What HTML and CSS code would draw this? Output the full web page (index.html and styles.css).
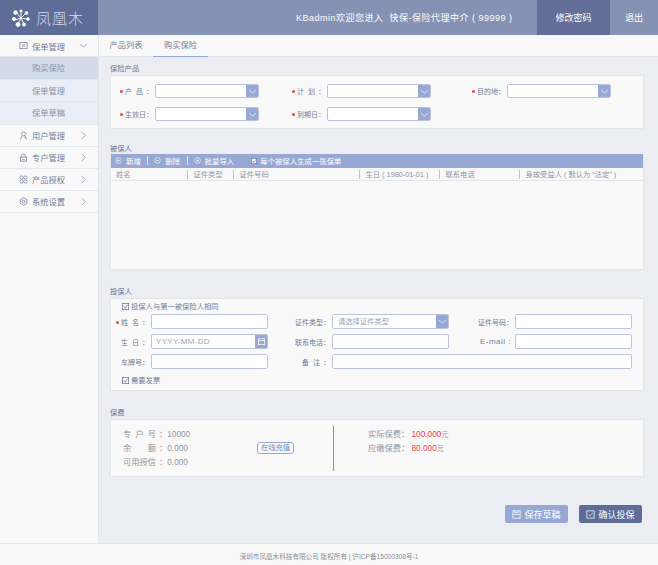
FILE: index.html
```html
<!DOCTYPE html>
<html lang="zh-CN">

<head>
    <meta charset="UTF-8">
    <meta name="viewport" content="width=device-width, initial-scale=1.0">
    <title>购买保险</title>
    <link rel="stylesheet" href="styles.css">
</head>

<body>
    <header class="top">
        <div class="logo">
            <svg class="logo_icon" viewBox="0 0 18 18">
                <path d="M9 9 4 3M9 9l5-5M9 9 3 11M9 9l6 1M9 9l-3 6M9 9l3 6M9 9V2" />
                <circle cx="3.5" cy="3.5" r="1.8" />
                <circle cx="9" cy="2" r="1.1" />
                <circle cx="14.5" cy="4" r="1.4" />
                <circle cx="2" cy="10" r="1.6" />
                <circle cx="16" cy="10" r="1.3" />
                <circle cx="6" cy="15.5" r="2" />
                <circle cx="12" cy="15.5" r="1.5" />
            </svg>
            <span class="logo_name">凤凰木</span>
        </div>
        <div class="welcome">KBadmin欢迎您进入&nbsp;&nbsp;快保-保险代理中介 ( 99999 )</div>
        <a class="top_btn top_pwd">修改密码</a>
        <a class="top_btn top_exit">退出</a>
    </header>

    <div class="middle">
        <nav class="side">
            <div class="menu">
                <svg class="menu_icon" viewBox="0 0 10 10"><rect x="1" y="1.5" width="8" height="7" /><path d="M3.2 3.5 6.8 6.5M6.8 3.5 3.2 6.5" /></svg>
                <span>保单管理</span>
                <svg class="menu_arrow" viewBox="0 0 10 10"><path d="M1 3l4 4 4-4" /></svg>
            </div>
            <div class="sub sub_on">购买保险</div>
            <div class="sub">保单管理</div>
            <div class="sub">保单草稿</div>
            <div class="menu">
                <svg class="menu_icon" viewBox="0 0 10 10"><circle cx="5" cy="3.2" r="2.2" /><path d="M1.5 9.5 3.5 5.2M8.5 9.5 6.5 5.2M6 7.5h2" /></svg>
                <span>用户管理</span>
                <svg class="menu_arrow" viewBox="0 0 10 10"><path d="M3 1l4 4-4 4" /></svg>
            </div>
            <div class="menu">
                <svg class="menu_icon" viewBox="0 0 10 10"><rect x="1.5" y="4.5" width="7" height="4.5" /><path d="M3 4.5V3a2 2 0 0 1 4 0v1.5M3.5 7h3" /></svg>
                <span>专户管理</span>
                <svg class="menu_arrow" viewBox="0 0 10 10"><path d="M3 1l4 4-4 4" /></svg>
            </div>
            <div class="menu">
                <svg class="menu_icon" viewBox="0 0 10 10"><circle cx="2.8" cy="2.8" r="1.8" /><circle cx="7.2" cy="2.8" r="1.8" /><circle cx="2.8" cy="7.2" r="1.8" /><circle cx="7.2" cy="7.2" r="1.8" /></svg>
                <span>产品授权</span>
                <svg class="menu_arrow" viewBox="0 0 10 10"><path d="M3 1l4 4-4 4" /></svg>
            </div>
            <div class="menu">
                <svg class="menu_icon" viewBox="0 0 10 10"><path d="M5 .8 8.7 3v4.2L5 9.2 1.300 7V3z" /><circle cx="5" cy="5" r="1.6" /></svg>
                <span>系统设置</span>
                <svg class="menu_arrow" viewBox="0 0 10 10"><path d="M3 1l4 4-4 4" /></svg>
            </div>
        </nav>

        <div class="content">
            <div class="tabs">
                <span class="tab tab_first">产品列表</span>
                <span class="tab tab_on">购买保险</span>
            </div>

            <main class="main">
                <h2 class="title">保险产品</h2>
                <section class="panel product">
                    <div class="field">
                        <label class="req"><span class="spread">产品</span>：</label>
                        <div class="control"><span class="control_txt"></span><span class="control_btn"><svg viewBox="0 0 10 10"><path d="M1.500 3.500 5 7l3.500-3.500" /></svg></span></div>
                    </div>
                    <div class="field">
                        <label class="req"><span class="spread">计划</span>：</label>
                        <div class="control"><span class="control_txt"></span><span class="control_btn"><svg viewBox="0 0 10 10"><path d="M1.500 3.500 5 7l3.500-3.500" /></svg></span></div>
                    </div>
                    <div class="field">
                        <label class="req">目的地：</label>
                        <div class="control"><span class="control_txt"></span><span class="control_btn"><svg viewBox="0 0 10 10"><path d="M1.500 3.500 5 7l3.500-3.500" /></svg></span></div>
                    </div>
                    <div class="field">
                        <label class="req">生效日：</label>
                        <div class="control"><span class="control_txt"></span><span class="control_btn"><svg viewBox="0 0 10 10"><path d="M1.500 3.500 5 7l3.500-3.500" /></svg></span></div>
                    </div>
                    <div class="field">
                        <label class="req">到期日：</label>
                        <div class="control"><span class="control_txt"></span><span class="control_btn"><svg viewBox="0 0 10 10"><path d="M1.500 3.500 5 7l3.500-3.500" /></svg></span></div>
                    </div>
                </section>

                <h2 class="title title_mid">被保人</h2>
                <section class="panel insured">
                    <div class="toolbar">
                        <span class="tool"><svg viewBox="0 0 10 10"><circle cx="5" cy="5" r="4" /><path d="M3 5h4M5 3v4" /></svg>新增</span>
                        <span class="tool_line"></span>
                        <span class="tool"><svg viewBox="0 0 10 10"><circle cx="5" cy="5" r="4" /><path d="M3 5h4" /></svg>删除</span>
                        <span class="tool_line"></span>
                        <span class="tool"><svg viewBox="0 0 10 10"><circle cx="5" cy="5" r="4" /><path d="M3 5h4M5 3v4" /></svg>批量导入</span>
                        <span class="tool tool_check"><svg class="tick_white" viewBox="0 0 10 10"><rect x=".5" y=".5" width="9" height="9" /><path d="M2.500 5 4.500 7.500 8 2.500" /></svg>每个被保人生成一张保单</span>
                    </div>
                    <div class="thead">
                        <span>姓名</span>
                        <span>证件类型</span>
                        <span>证件号码</span>
                        <span>生日 ( 1980-01-01 )</span>
                        <span>联系电话</span>
                        <span>身故受益人 ( 默认为 “法定” )</span>
                    </div>
                </section>

                <h2 class="title title_low">投保人</h2>
                <section class="panel holder">
                    <div class="check"><svg class="tick" viewBox="0 0 10 10"><rect x=".5" y=".5" width="9" height="9" /><path d="M2.500 5 4.500 7.500 8 2.500" /></svg>投保人与第一被保险人相同</div>
                    <div class="holder_grid">
                        <label class="req"><span class="spread">姓名</span>：</label>
                        <div class="control"></div>
                        <label>证件类型：</label>
                        <div class="control"><span class="control_txt">请选择证件类型</span><span class="control_btn"><svg viewBox="0 0 10 10"><path d="M1.500 3.500 5 7l3.500-3.500" /></svg></span></div>
                        <label>证件号码：</label>
                        <div class="control"></div>

                        <label><span class="spread">生日</span>：</label>
                        <div class="control"><span class="control_txt date_txt">YYYY-MM-DD</span><span class="control_btn"><svg viewBox="0 0 10 10"><rect x="1.500" y="2" width="7" height="6.500" /><path d="M1.500 4h7" /></svg></span></div>
                        <label>联系电话：</label>
                        <div class="control"></div>
                        <label class="mail">E-mail :</label>
                        <div class="control"></div>

                        <label>车牌号：</label>
                        <div class="control"></div>
                        <label><span class="spread">备注</span>：</label>
                        <div class="control control_wide"></div>
                    </div>
                    <div class="check"><svg class="tick" viewBox="0 0 10 10"><rect x=".5" y=".5" width="9" height="9" /><path d="M2.500 5 4.500 7.500 8 2.500" /></svg>需要发票</div>
                </section>

                <h2 class="title title_low">保费</h2>
                <section class="panel fee">
                    <div class="fee_left">
                        <div class="fee_row"><span class="fee_label">专户号</span>：<span class="fee_num">10000</span></div>
                        <div class="fee_row"><span class="fee_label">余额</span>：<span class="fee_num">0.000</span></div>
                        <div class="fee_row"><span class="fee_label">可用授信</span>：<span class="fee_num">0.000</span></div>
                    </div>
                    <a class="recharge">在线充值</a>
                    <div class="fee_line"></div>
                    <div class="fee_right">
                        <div class="fee_row"><span class="fee_label2">实际保费：</span><span class="fee_red">100.000</span><span class="fee_unit">元</span></div>
                        <div class="fee_row"><span class="fee_label2">应缴保费：</span><span class="fee_red">80.000</span><span class="fee_unit">元</span></div>
                    </div>
                </section>

                <div class="actions">
                    <a class="btn btn_save"><svg viewBox="0 0 10 10"><rect x="1" y="1" width="8" height="8" /><path d="M1 5h8M3 1v2h4V1" /></svg>保存草稿</a>
                    <a class="btn btn_ok"><svg viewBox="0 0 10 10"><rect x="1" y="1" width="8" height="8" /><path d="M3 5l1.500 1.500L7.500 3.500" /></svg>确认投保</a>
                </div>
            </main>
        </div>
    </div>

    <footer class="foot">深圳市凤凰木科技有限公司 版权所有 | 沪ICP备15000308号-1</footer>
</body>

</html>
```

FILE: styles.css
```css
* {
    box-sizing: border-box;
}

body {
    margin: 0;
    width: 658px;
    height: 565px;
    overflow: hidden;
    display: flex;
    flex-direction: column;
    font-family: "Liberation Sans", "Noto Sans CJK SC", sans-serif;
    font-size: 8.25px;
    color: #737d9b;
    background: #f9f9f9;
}

svg {
    fill: none;
    stroke: currentColor;
    stroke-width: 0.8;
}

.top {
    height: 35px;
    display: flex;
    align-items: center;
    background: #8592b3;
    color: #fff;
}

.logo {
    width: 98px;
    height: 100%;
    display: flex;
    align-items: center;
    padding-left: 12px;
    background: #5e6d98;
}

.logo_icon {
    width: 18px;
    height: 18px;
    fill: #fff;
    stroke: #fff;
    stroke-width: 0.9;
}

.logo_name {
    margin-left: 6px;
    font-family: "Noto Sans CJK SC", sans-serif;
    font-size: 15px;
    font-weight: 300;
    letter-spacing: 1px;
    color: #d5daea;
}

.welcome {
    margin-left: 198px;
    width: 241px;
    font-size: 9px;
    letter-spacing: 0.5px;
    white-space: nowrap;
}

.top_btn {
    height: 100%;
    display: flex;
    align-items: center;
    justify-content: center;
    font-size: 9px;
}

.top_pwd {
    width: 73px;
    background: #636f98;
}

.top_exit {
    width: 48px;
}

.middle {
    flex: 1;
    display: flex;
    min-height: 0;
}

.side {
    flex: none;
    width: 99px;
    border-right: 1px solid #e2e4ea;
    background: #f9f9f9;
}

.menu {
    height: 22px;
    display: flex;
    align-items: center;
    padding-left: 19px;
    border-bottom: 1px solid #e6e8ee;
}

.menu span {
    margin-left: 4px;
}

.menu_icon {
    width: 9px;
    height: 9px;
}

.menu_arrow {
    width: 9px;
    height: 9px;
    margin-left: 14px;
    stroke-width: 0.7;
}

.sub {
    height: 22.5px;
    line-height: 24px;
    padding-left: 32px;
    background: #e9edf5;
    color: #8b93a8;
    border-bottom: 1px solid #e2e6ef;
}

.sub_on {
    background: #d3dbe8;
}

.content {
    flex: 1;
    min-width: 0;
    display: flex;
    flex-direction: column;
}

.tabs {
    height: 22px;
    display: flex;
    border-bottom: 1px solid #e4e5ea;
}

.tab {
    width: 55px;
    height: 22px;
    line-height: 21px;
    text-align: center;
}

.tab_first {
    width: 54px;
}

.tab_on {
    border-bottom: 1.5px solid #98a8d4;
}

.main {
    flex: 1;
    padding: 6px 14px 0 11px;
    background: #ecedf2;
}

.title {
    margin: 0;
    height: 12px;
    line-height: 12px;
    font-size: 7.3px;
    font-weight: normal;
    color: #6a7594;
}

.title_mid {
    margin-top: 13px;
    line-height: 14px;
}

.title_low {
    margin-top: 16px;
}

.panel {
    background: #f9f9f9;
    border: 1px solid #e4e5ea;
}

.product {
    height: 54px;
    padding: 8px 0 0 8px;
    display: grid;
    grid-template-columns: 172px 180px 1fr;
    grid-auto-rows: 14px;
    row-gap: 9px;
}

.field {
    display: flex;
    align-items: center;
}

.field label {
    width: 36px;
    white-space: nowrap;
    font-size: 7px;
}

.req::before {
    content: "";
    display: inline-block;
    width: 3px;
    height: 3px;
    margin: 0 2px 1px 1px;
    border-radius: 50%;
    background: #f0413a;
    vertical-align: middle;
}

.spread {
    display: inline-block;
    width: 18px;
    margin-right: 3px;
    text-align-last: justify;
}

.control {
    height: 100%;
    display: flex;
    background: #fff;
    border: 1px solid #bcc3dc;
    border-radius: 2px;
    overflow: hidden;
    min-width: 0;
}

.field .control {
    width: 104px;
}

.control_txt {
    flex: 1;
    line-height: 13px;
    padding-left: 5px;
    font-size: 7.3px;
    color: #9ca3b5;
}

.date_txt {
    padding-left: 4px;
    font-size: 8px;
    letter-spacing: 0.3px;
}

.control_btn {
    width: 13px;
    margin: -1px;
    display: flex;
    align-items: center;
    justify-content: center;
    background: #98a8d4;
    color: #fff;
}

.control_btn svg {
    width: 9px;
    height: 9px;
}

.insured {
    height: 116px;
    border-top: none;
}

.toolbar {
    height: 14px;
    display: flex;
    align-items: center;
    padding: 0 0 1px 4px;
    background: #98a8d4;
    color: #fff;
    font-size: 7.4px;
}

.tool {
    display: flex;
    align-items: center;
    white-space: nowrap;
}

.tool svg {
    width: 7px;
    height: 7px;
    margin-right: 4px;
}

.tool_line {
    width: 1px;
    height: 9px;
    margin: 0 6px 0 6.5px;
    background: #dfe4f2;
}

.tool_check {
    margin-left: 17px;
}

.tool .tick_white {
    width: 6px;
    height: 6px;
    margin-right: 3px;
    background: #fff;
    color: #4f5a7c;
    stroke-width: 1;
}

.thead {
    height: 13px;
    display: grid;
    grid-template-columns: 76px 46px 126px 80px 80px 1fr;
    align-items: center;
    border-bottom: 1px solid #e4e5ea;
    font-size: 7.3px;
    color: #8d95aa;
}

.thead span {
    height: 9px;
    line-height: 9px;
    padding-left: 5.5px;
    border-left: 1px solid #bcc3dc;
    white-space: nowrap;
}

.thead span:first-child {
    padding-left: 5px;
    border-left: none;
}

.holder {
    height: 93px;
    padding: 1px 11px 0 0;
}

.check {
    height: 12px;
    display: flex;
    align-items: center;
    padding-left: 11px;
    font-size: 7.3px;
}

.tick {
    width: 7px;
    height: 7px;
    margin-right: 2px;
    color: #5e6d98;
    stroke-width: 1;
}

.holder_grid {
    display: grid;
    grid-template-columns: 40px 117px 64px 117px 66px 117px;
    grid-auto-rows: 15px;
    row-gap: 5px;
    margin: 2px 0 5px;
    align-items: center;
}

.holder_grid label {
    padding-right: 2px;
    text-align: right;
    white-space: nowrap;
    font-size: 7px;
}

.holder_grid .mail {
    padding-right: 4px;
    font-size: 8px;
    letter-spacing: 0.5px;
}

.control_wide {
    grid-column: span 3;
}

.fee {
    height: 58px;
    display: flex;
    align-items: center;
    padding-left: 12px;
    color: #94979f;
}

.fee_left {
    width: 134px;
    align-self: flex-start;
    margin-top: 8px;
}

.fee_row {
    height: 14px;
    line-height: 14px;
    white-space: nowrap;
}

.fee_label {
    display: inline-block;
    width: 33px;
    margin-right: 3px;
    text-align-last: justify;
}

.fee_label2 {
    display: inline-block;
    width: 43.5px;
}

.recharge {
    width: 37px;
    height: 12px;
    line-height: 10px;
    text-align: center;
    font-size: 7.3px;
    color: #6f86c4;
    border: 1px solid #98a8d4;
    border-radius: 3px;
}

.fee_line {
    width: 1px;
    height: 45px;
    margin-left: 39px;
    background: #8592b3;
}

.fee_right {
    align-self: flex-start;
    margin: 8px 0 0 34px;
}

.fee_red {
    color: #f33a3f;
}

.fee_unit {
    font-size: 7px;
}

.actions {
    display: flex;
    justify-content: flex-end;
    gap: 11px;
    margin-top: 28px;
    padding-right: 2px;
}

.btn {
    width: 63px;
    height: 18px;
    display: flex;
    align-items: center;
    justify-content: center;
    border-radius: 2px;
    color: #fff;
    font-size: 9px;
}

.btn svg {
    width: 9px;
    height: 9px;
    margin-right: 3px;
}

.btn_save {
    background: #98a8d4;
}

.btn_ok {
    background: #5e6d98;
}

.foot {
    height: 22px;
    line-height: 25px;
    text-align: center;
    font-size: 6.6px;
    color: #8b8f9b;
    border-top: 1px solid #e4e5ea;
    background: #f9f9f9;
}
```
